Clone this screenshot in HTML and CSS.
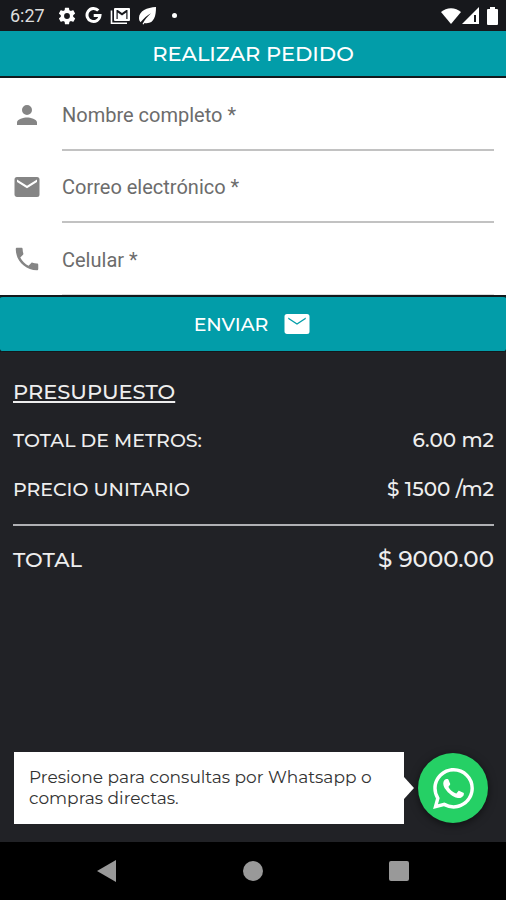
FILE: index.html
```html
<!DOCTYPE html>
<html lang="es">
<head>
<meta charset="utf-8">
<meta name="viewport" content="width=device-width, initial-scale=1">
<title>Realizar pedido</title>
<link rel="stylesheet" href="styles.css">
</head>
<body>
<div class="status">
  <span class="clock">6:27</span>
  <div class="notifications">
    <svg width="20" height="20" viewBox="0 0 24 24" aria-hidden="true"><path fill-rule="evenodd" d="M19.4 13a7.500 7.500 0 0 0 0-2l2.100-1.700a.5.5 0 0 0 .1-.6l-2-3.500a.5.5 0 0 0-.6-.2l-2.500 1a7.300 7.300 0 0 0-1.700-1l-.4-2.600A.5.500 0 0 0 14 2h-4a.5.5 0 0 0-.5.4L9.200 5a7.700 7.700 0 0 0-1.700 1L5 5a.5.5 0 0 0-.6.200l-2 3.500a.5.5 0 0 0 .1.600L4.600 11a7.900 7.900 0 0 0 0 2l-2.100 1.700a.5.5 0 0 0-.1.600l2 3.500c.1.200.4.300.6.200l2.500-1a7.300 7.300 0 0 0 1.700 1l.3 2.600c0 .2.200.4.500.4h4c.2 0 .5-.2.500-.4l.4-2.600a7.700 7.700 0 0 0 1.700-1l2.500 1c.2.100.5 0 .6-.2l2-3.500a.5.5 0 0 0-.1-.6L19.400 13zM12 15.500a3.500 3.500 0 1 1 0-7 3.500 3.500 0 0 1 0 7z"/></svg>
    <svg width="17" height="17" viewBox="0 0 17 17" aria-hidden="true"><path d="M13.300 3.600A6.500 6.500 0 1 0 15 8.500H8.700" fill="none" stroke="currentColor" stroke-width="3"/></svg>
    <svg width="21" height="18" viewBox="0 0 21 18" aria-hidden="true"><path d="M1.500 3.500v12.700H17" fill="none" stroke="currentColor" stroke-width="1.600"/><path fill-rule="evenodd" d="M5 1h14a1 1 0 0 1 1 1v11a1 1 0 0 1-1 1H5a1 1 0 0 1-1-1V2a1 1 0 0 1 1-1zM6.500 3v9h1.200V5.600l4.300 3 4.300-3V12h1.200V3h-1.200L12 6 7.700 3z"/></svg>
    <svg width="18" height="18" viewBox="0 0 18 18" aria-hidden="true"><path d="M17 0C8 .5 0 4 0 11c0 1.800.6 3.200 1.500 4.200C5 11 8 8.500 12 6.200 8.500 9.500 5.500 12.500 3.500 17l1 .6 1-1.600C15 17.500 17 9.500 17 0z"/></svg>
    <span class="more-dot"></span>
  </div>
  <div class="signals">
    <svg width="20" height="18" viewBox="0 0 20 18" aria-hidden="true"><path d="M10 17 0 5a15 15 0 0 1 20 0z"/></svg>
    <svg width="17" height="17" viewBox="0 0 17 17" aria-hidden="true"><path d="M0 17 17 0v17zM12 8v7h2V8z" fill-rule="evenodd"/></svg>
    <svg class="battery" width="11" height="18" viewBox="0 0 11 18" aria-hidden="true"><path d="M3 0h5v2h2a1 1 0 0 1 1 1v14a1 1 0 0 1-1 1H1a1 1 0 0 1-1-1V3a1 1 0 0 1 1-1h2z"/></svg>
  </div>
</div>
<header class="app-bar"><h1>REALIZAR PEDIDO</h1></header>
<form class="order">
  <div class="fields">
    <div class="field">
      <label for="name" aria-label="Nombre completo"><svg width="30" height="30" viewBox="0 0 24 24"><path d="M12 12a4 4 0 1 0 0-8 4 4 0 0 0 0 8zm0 2c-2.700 0-8 1.300-8 4v2h16v-2c0-2.700-5.300-4-8-4z"/></svg></label>
      <input id="name" type="text" placeholder="Nombre completo *">
    </div>
    <div class="field">
      <label for="email" aria-label="Correo electrónico"><svg width="30" height="30" viewBox="0 0 24 24"><path d="M20 4H4a2 2 0 0 0-2 2v12c0 1.100.9 2 2 2h16a2 2 0 0 0 2-2V6a2 2 0 0 0-2-2zm0 4-8 5-8-5V6l8 5 8-5z"/></svg></label>
      <input id="email" type="email" placeholder="Correo electrónico *">
    </div>
    <div class="field">
      <label for="phone" aria-label="Celular"><svg width="30" height="30" viewBox="0 0 24 24"><path d="M6.620 10.790c1.440 2.830 3.760 5.140 6.590 6.590l2.200-2.200c.27-.27.67-.36 1.020-.24 1.120.37 2.330.57 3.570.57.550 0 1 .45 1 1V20c0 .55-.45 1-1 1-9.390 0-17-7.610-17-17 0-.55.450-1 1-1h3.500c.55 0 1 .45 1 1 0 1.250.2 2.450.57 3.570.11.350.03.740-.25 1.020z"/></svg></label>
      <input id="phone" type="tel" placeholder="Celular *">
    </div>
  </div>
  <button class="send" type="submit">ENVIAR
    <svg width="30" height="30" viewBox="0 0 24 24" aria-hidden="true"><path d="M20 4H4a2 2 0 0 0-2 2v12c0 1.100.9 2 2 2h16a2 2 0 0 0 2-2V6a2 2 0 0 0-2-2zm-1 4-7 4.500L5 8V6.800l7 4.500 7-4.500z"/></svg>
  </button>
</form>
<main class="budget">
  <h2>PRESUPUESTO</h2>
  <dl>
    <div class="line"><dt>TOTAL DE METROS:</dt><dd>6.00 m2</dd></div>
    <div class="line"><dt>PRECIO UNITARIO</dt><dd>$ 1500 /m2</dd></div>
    <div class="line total"><dt>TOTAL</dt><dd>$ 9000.00</dd></div>
  </dl>
</main>
<aside class="contact">
  <p class="bubble">Presione para consultas por Whatsapp o compras directas.</p>
  <a class="whatsapp" href="#whatsapp" aria-label="Whatsapp">
    <svg width="41" height="41" viewBox="0 0 24 24" aria-hidden="true"><path d="M17.472 14.382c-.297-.149-1.758-.867-2.030-.967-.273-.099-.471-.148-.670.150-.197.297-.767.966-.940 1.164-.173.199-.347.223-.644.075-.297-.150-1.255-.463-2.390-1.475-.883-.788-1.480-1.761-1.653-2.059-.173-.297-.018-.458.130-.606.134-.133.298-.347.446-.520.149-.174.198-.298.298-.497.099-.198.050-.371-.025-.520-.075-.149-.669-1.612-.916-2.207-.242-.579-.487-.500-.669-.510-.173-.008-.371-.010-.570-.010-.198 0-.520.074-.792.372-.272.297-1.040 1.016-1.040 2.479 0 1.462 1.065 2.875 1.213 3.074.149.198 2.096 3.200 5.077 4.487.709.306 1.262.489 1.694.625.712.227 1.360.195 1.871.118.571-.085 1.758-.719 2.006-1.413.248-.694.248-1.289.173-1.413-.074-.124-.272-.198-.570-.347m-5.421 7.403h-.004a9.870 9.870 0 0 1-5.031-1.378l-.361-.214-3.741.982.998-3.648-.235-.374a9.860 9.860 0 0 1-1.510-5.260c.001-5.450 4.436-9.884 9.888-9.884 2.640 0 5.122 1.030 6.988 2.898a9.825 9.825 0 0 1 2.893 6.994c-.003 5.450-4.437 9.884-9.885 9.884m8.413-18.297A11.815 11.815 0 0 0 12.050 0C5.495 0 .160 5.335.157 11.892c0 2.096.547 4.142 1.588 5.945L.057 24l6.305-1.654a11.882 11.882 0 0 0 5.683 1.448h.005c6.554 0 11.890-5.335 11.893-11.893a11.821 11.821 0 0 0-3.480-8.413z"/></svg>
  </a>
</aside>
<nav class="system-nav">
  <button type="button" aria-label="Atrás"><svg width="22" height="22" viewBox="0 0 22 22"><path d="M20 0v22L1 11z"/></svg></button>
  <button type="button" aria-label="Inicio"><svg width="22" height="22" viewBox="0 0 22 22"><circle cx="11" cy="11" r="10"/></svg></button>
  <button type="button" aria-label="Recientes"><svg width="22" height="22" viewBox="0 0 22 22"><rect x="1" y="1" width="20" height="20" rx="2"/></svg></button>
</nav>
</body>
</html>
```

FILE: styles.css
```css
* { box-sizing: border-box; }

body {
  margin: 0;
  min-height: 100vh;
  display: flex;
  flex-direction: column;
  background: #212226;
  color: #eee;
  font-family: Montserrat, Inter, sans-serif;
  font-weight: 500;
}

svg { display: block; fill: currentColor; }
h1, h2, dl, dd, p { margin: 0; }

.status {
  display: flex;
  align-items: center;
  height: 31px;
  padding: 0 8px 0 10px;
  background: #17181c;
  color: #fff;
}
.clock { font: 400 18px/30px Roboto, sans-serif; color: #ddd; }
.notifications { display: flex; align-items: center; gap: 8px; margin-left: 12px; }
.more-dot { width: 5px; height: 5px; margin-left: 7px; border-radius: 50%; background: #fff; }
.signals { display: flex; align-items: center; gap: 1px; margin-left: auto; }
.battery { margin-left: 7px; }

.app-bar {
  height: 47px;
  background: #029da9;
  border-bottom: 2px solid #12191c;
  text-align: center;
}
h1 { font-size: 21px; line-height: 45px; font-weight: 500; color: #fff; }

.fields { background: #fff; }
.field { display: flex; align-items: center; height: 73px; padding: 0 12px; }
.field + .field { height: 72px; }
.field label { width: 50px; color: #858585; }
.field input {
  flex: 1;
  min-width: 0;
  height: 100%;
  padding: 2px 0 0;
  border: 0;
  border-bottom: 2px solid #c2c2c2;
  border-radius: 0;
  outline: 0;
  background: none;
  color: #222;
  font: 400 20px Roboto, sans-serif;
}
.field:last-child input { border-bottom: 1px solid #ddd; }
.field input::placeholder { color: #6c6c6c; opacity: 1; }

.order { background: #12191c; }
.send {
  display: flex;
  align-items: center;
  justify-content: center;
  gap: 14px;
  width: 100%;
  height: 57px;
  padding: 0;
  border: 0;
  border-top: 2px solid #12191c;
  border-bottom: 1px solid #12191c;
  border-radius: 3px;
  background: #029da9;
  color: #fff;
  font: inherit;
  font-size: 19px;
}

.budget { flex: 1; padding: 26px 12px 0 13px; }
h2 {
  font-size: 21px;
  line-height: 28px;
  font-weight: 500;
  text-decoration: underline;
  text-decoration-thickness: 2px;
  text-underline-offset: 2px;
  text-decoration-skip-ink: none;
}
dl { padding-top: 10px; }
.line { display: flex; justify-content: space-between; font-size: 19px; line-height: 49px; }
.line dd { font-size: 20px; }
.total { margin-top: 10px; padding-top: 9px; border-top: 2px solid #b0b1b4; font-size: 21px; }
.total dd { font-size: 23px; }

.contact { display: flex; align-items: center; gap: 14px; padding: 0 18px 18px 14px; }
.bubble {
  position: relative;
  flex: 1;
  padding: 15px;
  background: #fff;
  color: #333;
  font-size: 17px;
  line-height: 21px;
  font-weight: 400;
}
.bubble::after {
  content: "";
  position: absolute;
  left: 100%;
  top: 50%;
  margin-top: -11px;
  border: solid transparent;
  border-width: 11px 0 11px 10px;
  border-left-color: #fff;
}
.whatsapp {
  display: grid;
  place-items: center;
  width: 70px;
  height: 70px;
  border-radius: 50%;
  background: #25d065;
  color: #fff;
  box-shadow: 0 2px 8px #0008;
}

.system-nav {
  display: flex;
  justify-content: center;
  height: 58px;
  background: #000;
}
.system-nav button {
  display: grid;
  place-items: center;
  width: 146px;
  padding: 0;
  border: 0;
  background: none;
  color: #999;
}
```
